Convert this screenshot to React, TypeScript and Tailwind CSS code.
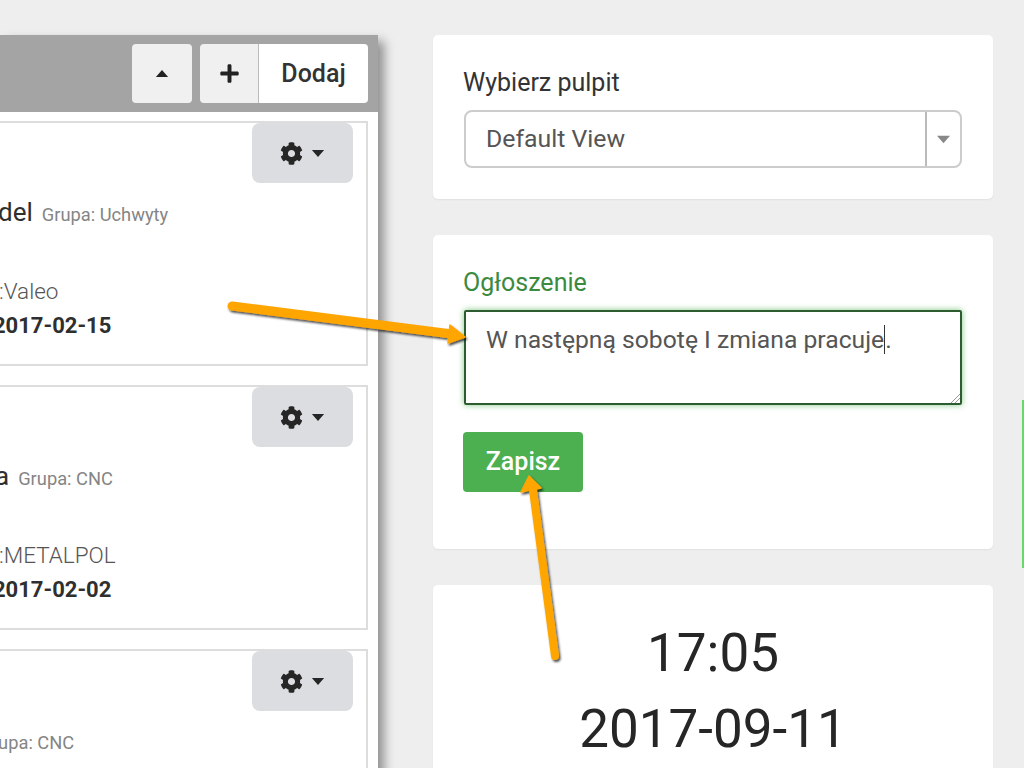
import { FaCog, FaPlus } from 'react-icons/fa';

const CARDS = [
  { name: 'del', nameShift: '-ml-[2px]', group: 'Grupa: Uchwyty', client: ':Valeo', date: '2017-02-15' },
  { name: 'a', nameShift: '-ml-[5px]', group: 'Grupa: CNC', client: ':METALPOL', date: '2017-02-02' },
  { name: '\u00a0', nameShift: '-ml-[36px]', group: 'Grupa: CNC', client: '', date: '' }
];

function Triangle({ up = false, className = '' }: { up?: boolean; className?: string }) {
  return (
    <svg viewBox="0 0 14 8" className={className} fill="currentColor">
      <path d={up ? 'M7 0 14 8H0Z' : 'M0 0H14L7 8Z'} />
    </svg>
  );
}

function OrderCard({ card }: { card: (typeof CARDS)[number] }) {
  return (
    <div className="h-[245px] shrink-0 border-y-2 border-r-2 border-[#dddddd] bg-white">
      <div className="flex justify-end pr-[13px]">
        <button
          type="button"
          className="flex h-[60px] w-[101px] items-center justify-center gap-[8px] rounded-[8px] bg-[#dcdde0] text-[#262626]"
        >
          <FaCog className="h-[23px] w-[23px]" />
          <Triangle className="h-[7px] w-[14px]" />
        </button>
      </div>
      <div className={`mt-[10px] flex h-[40px] items-baseline gap-[9px] ${card.nameShift}`}>
        <span className="text-[26px] text-[#2f2f2f]">{card.name}</span>
        <span className="text-[18.3px] text-[#858585]">{card.group}</span>
      </div>
      <p className="mt-[40px] -ml-[1px] h-[36px] text-[22.5px] leading-[36px] font-light text-[#555555]">{card.client}</p>
      <p className="-ml-[7px] h-[34px] text-[22px] leading-[34px] font-bold text-[#2f2f2f]">{card.date}</p>
    </div>
  );
}

export default function App() {
  return (
    <div className="relative flex h-[768px] w-[1024px] overflow-hidden bg-[#eeeeee] pt-[35px] font-['Roboto',sans-serif]">
      <section className="flex h-[760px] w-[378px] shrink-0 flex-col shadow-[6px_6px_10px_rgba(0,0,0,0.4)]">
        <header className="flex h-[77px] shrink-0 items-start justify-end gap-[8px] bg-[#a4a4a4] pt-[9px] pr-[10px]">
          <button type="button" className="flex h-[59px] w-[60px] items-center justify-center rounded-[4px] bg-[#f0f0f0] text-[#222222]">
            <Triangle up className="h-[7px] w-[14px]" />
          </button>
          <div className="flex h-[59px] overflow-hidden rounded-[4px]">
            <span className="flex w-[59px] items-center justify-center border-r border-[#bbbbbb] bg-[#f0f0f0] text-[#222222]">
              <FaPlus className="h-[21px] w-[21px]" />
            </span>
            <span className="flex w-[109px] items-center justify-center bg-white text-[25px] font-medium text-[#333333]">Dodaj</span>
          </div>
        </header>
        <div className="flex flex-col gap-[19px] bg-white pt-[9px] pr-[10px]">
          {CARDS.map((card, i) => (
            <OrderCard key={i} card={card} />
          ))}
        </div>
      </section>

      <main className="ml-[55px] flex w-[560px] shrink-0 flex-col gap-[36px]">
        <div className="h-[164px] shrink-0 rounded-[5px] bg-white px-[30px] pt-[30px] shadow-[0_1px_2px_rgba(0,0,0,0.06)]">
          <label className="block h-[45px] text-[25px] leading-[36px] text-[#333333]">Wybierz pulpit</label>
          <div className="ml-[1px] flex h-[58px] w-[498px] items-stretch rounded-[8px] border-2 border-[#cccccc] text-[24.8px] text-[#555555]">
            <span className="flex flex-1 items-center border-r-2 border-[#bbbbbb] pl-[20px]">Default View</span>
            <span className="flex w-[33px] items-center justify-center text-[#888888]">
              <Triangle className="h-[9px] w-[13px]" />
            </span>
          </div>
        </div>

        <div className="h-[314px] shrink-0 rounded-[5px] bg-white px-[30px] pt-[30px] shadow-[0_1px_2px_rgba(0,0,0,0.06)]">
          <label className="block h-[45px] text-[25px] leading-[36px] text-[#3c8a40]">Ogłoszenie</label>
          <div className="relative ml-[1px] h-[95px] w-[498px] rounded-[2px] border-2 border-[#2c5c30] pt-[11px] pl-[20px] text-[24.7px] leading-[34px] text-[#555555] shadow-[0_0_6px_rgba(76,175,80,0.7)]">
            W następną sobotę I zmiana pracuj<span className="border-r border-[#333333]">e</span>.
            <svg viewBox="0 0 10 10" className="absolute right-0 bottom-0 h-[10px] w-[10px]" stroke="#999999" fill="none">
              <path d="M1 10 10 1M5 10 10 5" />
            </svg>
          </div>
          <button
            type="button"
            className="mt-[27px] h-[60px] w-[120px] rounded-[4px] bg-[#4caf50] text-[25px] font-medium text-white"
          >
            Zapisz
          </button>
        </div>

        <div className="h-[300px] shrink-0 rounded-[5px] bg-white pt-[30px] text-center text-[53px] leading-[76px] text-[#262626] shadow-[0_1px_2px_rgba(0,0,0,0.06)]">
          <p>17:05</p>
          <p>2017-09-11</p>
        </div>
      </main>

      <div className="mt-[365px] ml-[29px] h-[168px] w-[2px] shrink-0 bg-[#66d96a]" />

      {/* annotation arrows drawn over the page */}
      <svg className="pointer-events-none absolute inset-0 h-[768px] w-[1024px]" viewBox="0 0 1024 768">
        <defs>
          <filter id="arrowShadow" x="-20%" y="-20%" width="140%" height="140%">
            <feDropShadow dx="1.5" dy="2" stdDeviation="1.2" floodColor="#000000" floodOpacity="0.7" />
          </filter>
        </defs>
        <g filter="url(#arrowShadow)" fill="#ffa500" stroke="#ffa500" strokeLinecap="round" strokeLinejoin="round">
          <path d="M232 306 452 334" fill="none" strokeWidth="9" />
          <path d="M465 337 450 325 448 343Z" strokeWidth="1.5" />
          <path d="M555 656 533 490" fill="none" strokeWidth="8" />
          <path d="M529 476 521 492 541 488Z" strokeWidth="1.5" />
        </g>
      </svg>
    </div>
  );
}
